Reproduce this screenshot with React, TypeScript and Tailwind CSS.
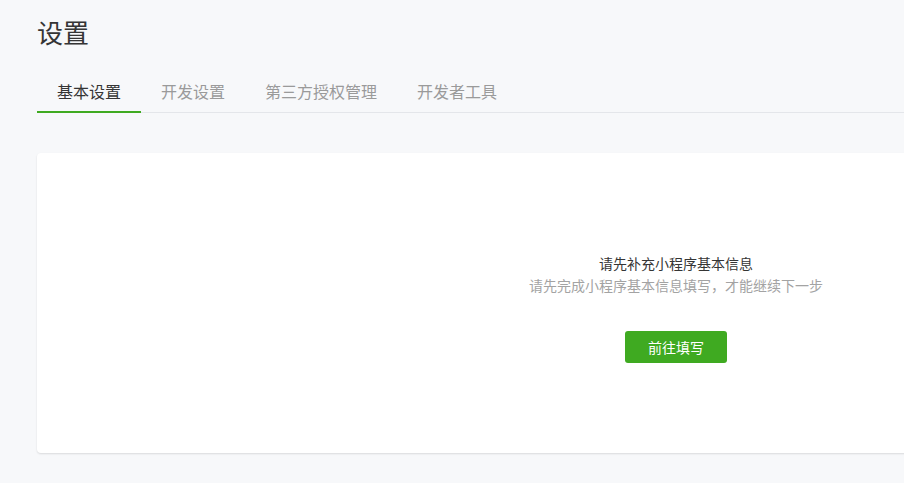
import React from "react";

const tabs = ["基本设置", "开发设置", "第三方授权管理", "开发者工具"];

export default function App() {
  return (
    <div
      className="w-[904px] h-[483px] overflow-hidden bg-[#f7f8fa]"
      style={{ fontFamily: '"Noto Sans CJK SC", "Noto Sans", sans-serif' }}
    >
      <div className="pl-[37px] w-[1352px]">
        <h1 className="pt-[14px] text-[26px] leading-[36px] text-[#353535] font-normal">设置</h1>
        <div className="mt-[30px] flex border-b border-[#e4e6ea]">
          {tabs.map((t, i) => (
            <div
              key={t}
              className={
                i === 0
                  ? "px-[20px] pb-[9px] text-[16px] leading-[22px] text-[#353535] border-b-2 border-[#3faa21] -mb-px"
                  : "px-[20px] pb-[9px] text-[16px] leading-[22px] text-[#9a9a9a]"
              }
            >
              {t}
            </div>
          ))}
        </div>
        <div className="mt-[40px] w-[1278px] h-[300px] bg-white rounded-[4px] shadow-[0_1px_2px_rgba(0,0,0,0.12)] flex flex-col items-center">
          <div className="mt-[99px] text-[14px] leading-[22px] text-[#353535]">请先补充小程序基本信息</div>
          <div className="text-[14px] leading-[22px] text-[#a3a3a3]">请先完成小程序基本信息填写，才能继续下一步</div>
          <button className="mt-[35px] w-[102px] h-[32px] rounded-[3px] bg-[#3faa21] text-white text-[14px] leading-[32px]">
            前往填写
          </button>
        </div>
      </div>
    </div>
  );
}
